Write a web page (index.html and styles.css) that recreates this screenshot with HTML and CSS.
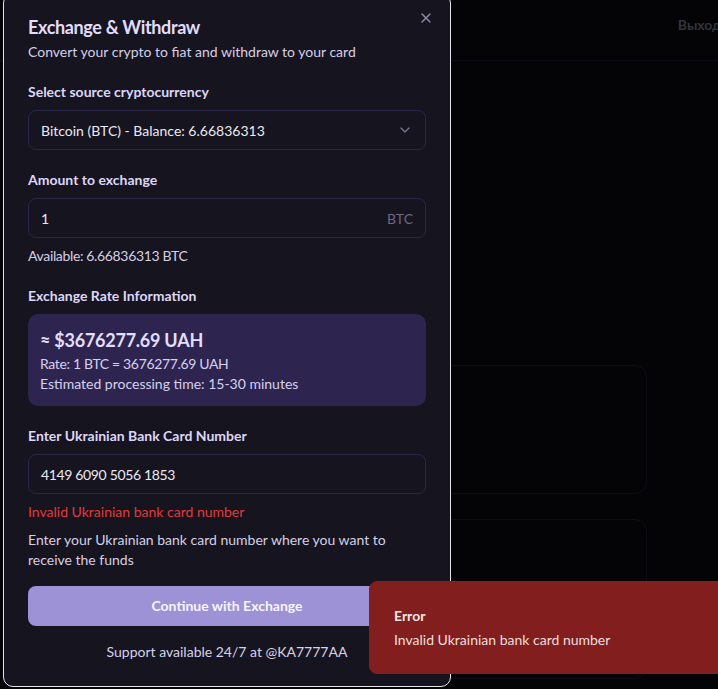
FILE: index.html
```html
<!DOCTYPE html>
<html lang="en">
<head>
<meta charset="utf-8">
<title>Exchange &amp; Withdraw</title>
<link rel="stylesheet" href="styles.css">
</head>
<body>
<div class="page">
  <header class="topbar">
    <span class="logout">Выход</span>
  </header>
  <main class="main">
    <div class="card card-one"></div>
    <div class="card card-two"></div>
  </main>
</div>

<div class="dialog">
  <button class="close" aria-label="Close">
    <svg width="16" height="16" viewBox="0 0 24 24" fill="none" stroke="currentColor" stroke-width="2" stroke-linecap="round" stroke-linejoin="round"><path d="M18 6 6 18"/><path d="m6 6 12 12"/></svg>
  </button>
  <div class="dialog-header">
    <h2 class="title">Exchange &amp; Withdraw</h2>
    <p class="subtitle">Convert your crypto to fiat and withdraw to your card</p>
  </div>

  <section class="field">
    <div class="label">Select source cryptocurrency</div>
    <div class="control select">
      <span>Bitcoin (BTC) - Balance: 6.66836313</span>
      <svg class="chevron" width="16" height="16" viewBox="0 0 24 24" fill="none" stroke="currentColor" stroke-width="2" stroke-linecap="round" stroke-linejoin="round"><path d="m6 9 6 6 6-6"/></svg>
    </div>
  </section>

  <section class="field">
    <div class="label">Amount to exchange</div>
    <div class="control">
      <span>1</span>
      <span class="suffix">BTC</span>
    </div>
    <p class="note numeric">Available: 6.66836313 BTC</p>
  </section>

  <section class="field">
    <div class="label">Exchange Rate Information</div>
    <div class="rate-box">
      <div class="rate-amount">≈ $3676277.69 UAH</div>
      <div class="rate-line numeric">Rate: 1 BTC = 3676277.69 UAH</div>
      <div class="rate-line">Estimated processing time: 15-30 minutes</div>
    </div>
  </section>

  <section class="field">
    <div class="label">Enter Ukrainian Bank Card Number</div>
    <div class="control">
      <span class="numeric">4149 6090 5056 1853</span>
    </div>
    <p class="error">Invalid Ukrainian bank card number</p>
    <p class="note">Enter your Ukrainian bank card number where you want to receive the funds</p>
  </section>

  <button class="primary">Continue with Exchange</button>
  <p class="support">Support available 24/7 at @KA7777AA</p>
</div>

<div class="toast">
  <div class="toast-title">Error</div>
  <div class="toast-desc">Invalid Ukrainian bank card number</div>
</div>
</body>
</html>
```

FILE: styles.css
```css
* { box-sizing: border-box; }
html, body {
  margin: 0;
  padding: 0;
  height: 100%;
  overflow: hidden;
  background: #040407;
  font-family: Lato, "Open Sans", sans-serif;
}
p { margin: 0; }
h2 { margin: 0; }

.page {
  width: 100%;
  height: 100%;
}
.topbar {
  height: 61px;
  border-bottom: 1px solid #0d0c15;
  display: flex;
  justify-content: flex-end;
  align-items: center;
  padding-bottom: 12px;
}
.logout {
  color: #34333d;
  font-weight: 700;
  font-size: 14px;
  margin-right: -3px;
}
.main {
  padding: 304px 71px 0 71px;
  display: flex;
  flex-direction: column;
  gap: 25px;
}
.card {
  border: 1px solid #0d0d16;
  border-radius: 12px;
  background: #040407;
}
.card-one { height: 129px; }
.card-two { height: 160px; }

.dialog {
  position: fixed;
  left: 3px;
  top: -7px;
  width: 448px;
  background: #16141f;
  border: 1px solid #e6e6ea;
  border-radius: 10px;
  padding: 24px;
  color: #d6d2e8;
}
.close {
  position: absolute;
  right: 16px;
  top: 16px;
  width: 16px;
  height: 16px;
  padding: 0;
  border: 0;
  background: transparent;
  color: #8f8aa8;
  display: flex;
}
.title {
  font-size: 18px;
  line-height: 18px;
  font-weight: 700;
  letter-spacing: -0.35px;
  color: #e2ddfb;
}
.subtitle {
  margin-top: 6px;
  font-size: 14px;
  line-height: 20px;
  color: #d4d0e8;
}
.field {
  margin-top: 20px;
  display: flex;
  flex-direction: column;
  gap: 8px;
}
.label {
  font-size: 14px;
  line-height: 20px;
  font-weight: 700;
  color: #ddd7f8;
}
.control {
  height: 40px;
  border: 1px solid #2a2448;
  border-radius: 8px;
  padding: 0 12px;
  display: flex;
  align-items: center;
  justify-content: space-between;
  font-size: 14px;
  color: #ebe9f4;
}
.chevron { color: #77738c; }
.suffix { color: #6c6880; }
.numeric { letter-spacing: -0.35px; }
.note {
  font-size: 14px;
  line-height: 20px;
  color: #d4d0e6;
}
.error {
  font-size: 14px;
  line-height: 20px;
  color: #e03a3a;
}
.rate-box {
  background: #2d2550;
  border-radius: 10px;
  padding: 12px;
}
.rate-amount {
  font-size: 18px;
  line-height: 28px;
  font-weight: 700;
  letter-spacing: -0.25px;
  color: #e3defb;
}
.rate-line {
  font-size: 14px;
  line-height: 20px;
  color: #d6d1ee;
}
.primary {
  margin-top: 16px;
  width: 100%;
  height: 40px;
  border: 0;
  border-radius: 8px;
  background: #9d92d6;
  color: #f6f4ff;
  font-family: inherit;
  font-size: 14px;
  font-weight: 700;
  padding: 0 0 2px;
}
.support {
  margin-top: 16px;
  text-align: center;
  font-size: 14px;
  line-height: 20px;
  color: #d6d2ea;
}

.toast {
  position: fixed;
  left: 369px;
  top: 581px;
  width: 400px;
  height: 93px;
  background: #821e1e;
  border: 1px solid #821e1e;
  border-radius: 8px;
  padding: 24px 24px;
  color: #f3e6e6;
}
.toast-title {
  font-size: 14px;
  line-height: 20px;
  font-weight: 700;
}
.toast-desc {
  margin-top: 4px;
  font-size: 14px;
  line-height: 20px;
  color: #ecdede;
}
```
